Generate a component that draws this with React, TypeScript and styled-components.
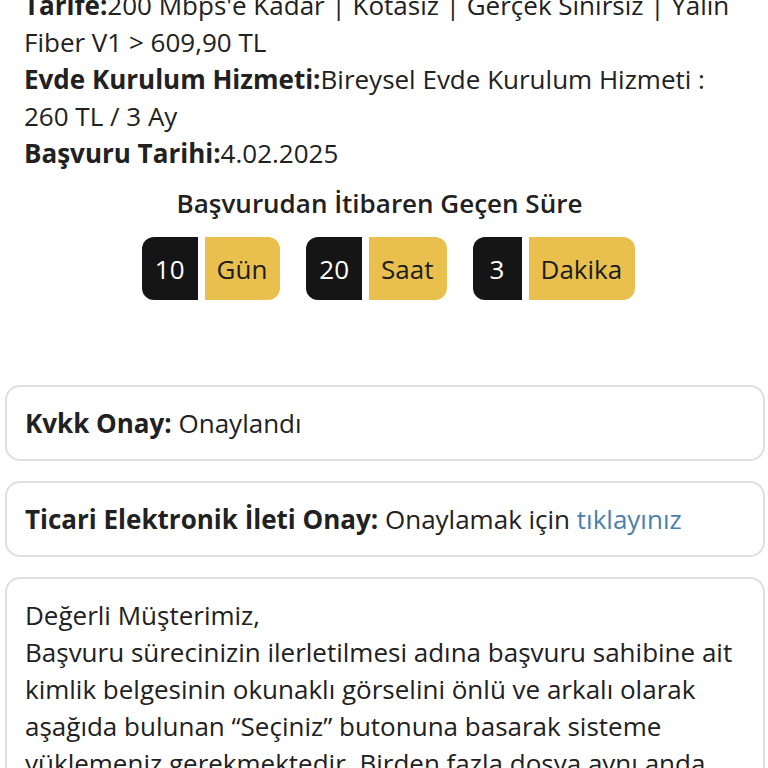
import styled, { createGlobalStyle } from "styled-components";

const GlobalStyle = createGlobalStyle`
  html, body {
    margin: 0;
    padding: 0;
    background: #ffffff;
  }
  body {
    font-family: "Open Sans", "Noto Sans", sans-serif;
    color: #212121;
    overflow: hidden;
  }
`;

const timer = [
  { value: "10", unit: "Gün" },
  { value: "20", unit: "Saat" },
  { value: "3", unit: "Dakika" },
];

const App = () => {
  return (
    <Page>
      <GlobalStyle />
      <Info>
        <Row>
          <Label>Tarife:</Label>200 Mbps'e Kadar | Kotasız | Gerçek Sınırsız | Yalın
          Fiber V1 &gt; 609,90 TL
        </Row>
        <Row>
          <Label>Evde Kurulum Hizmeti:</Label>Bireysel Evde Kurulum Hizmeti : 260 TL / 3 Ay
        </Row>
        <Row>
          <Label>Başvuru Tarihi:</Label>4.02.2025
        </Row>
      </Info>

      <Elapsed>
        <ElapsedTitle>Başvurudan İtibaren Geçen Süre</ElapsedTitle>
        <Timer>
          {timer.map((t) => (
            <TimerGroup key={t.unit}>
              <Value>{t.value}</Value>
              <Unit>{t.unit}</Unit>
            </TimerGroup>
          ))}
        </Timer>
      </Elapsed>

      <Cards>
        <Card>
          <Label>Kvkk Onay:</Label> Onaylandı
        </Card>
        <Card>
          <Label>Ticari Elektronik İleti Onay:</Label> Onaylamak için{" "}
          <Link href="#">tıklayınız</Link>
        </Card>
        <Card>
          <Greeting>Değerli Müşterimiz,</Greeting>
          <Text>
            Başvuru sürecinizin ilerletilmesi adına başvuru sahibine ait kimlik belgesinin
            okunaklı görselini önlü ve arkalı olarak aşağıda bulunan “Seçiniz” butonuna basarak
            sisteme yüklemeniz gerekmektedir. Birden fazla dosya aynı anda seçilerek
            yüklenebilir.
          </Text>
        </Card>
      </Cards>
    </Page>
  );
};

export default App;

const Page = styled.div`
  display: flex;
  flex-direction: column;
  padding: 0 3px 0 5px;
`;

const Info = styled.div`
  margin-top: -13px;
  padding: 0 21px 0 19px;
  font-size: 26px;
  line-height: 37px;
`;

const Row = styled.div``;

const Label = styled.b`
  font-weight: 700;
`;

const Elapsed = styled.div`
  display: flex;
  flex-direction: column;
  align-items: center;
  margin-top: 13px;
`;

const ElapsedTitle = styled.div`
  font-size: 26px;
  line-height: 37px;
  font-weight: 600;
  margin-left: -11px;
`;

const Timer = styled.div`
  display: flex;
  gap: 26px;
  margin-top: 15px;
  margin-left: 7px;
`;

const TimerGroup = styled.div`
  display: flex;
  gap: 7px;
  height: 63px;
  font-size: 26px;
`;

const Value = styled.div`
  display: flex;
  align-items: center;
  justify-content: center;
  min-width: 49px;
  padding: 0 13px;
  box-sizing: border-box;
  background: #151515;
  color: #ffffff;
  border-radius: 12px 0 0 12px;
`;

const Unit = styled.div`
  display: flex;
  align-items: center;
  padding: 0 13px 0 12px;
  background: #e9c04d;
  color: #1c1c1c;
  border-radius: 0 12px 12px 0;
`;

const Cards = styled.div`
  display: flex;
  flex-direction: column;
  gap: 20px;
  margin-top: 85px;
`;

const Card = styled.div`
  border: 2px solid #dedede;
  border-radius: 15px;
  padding: 18px 18px 17px;
  font-size: 26px;
  line-height: 37px;
`;

const Link = styled.a`
  color: #4a7fae;
  text-decoration: none;
`;

const Greeting = styled.div``;

const Text = styled.div``;
